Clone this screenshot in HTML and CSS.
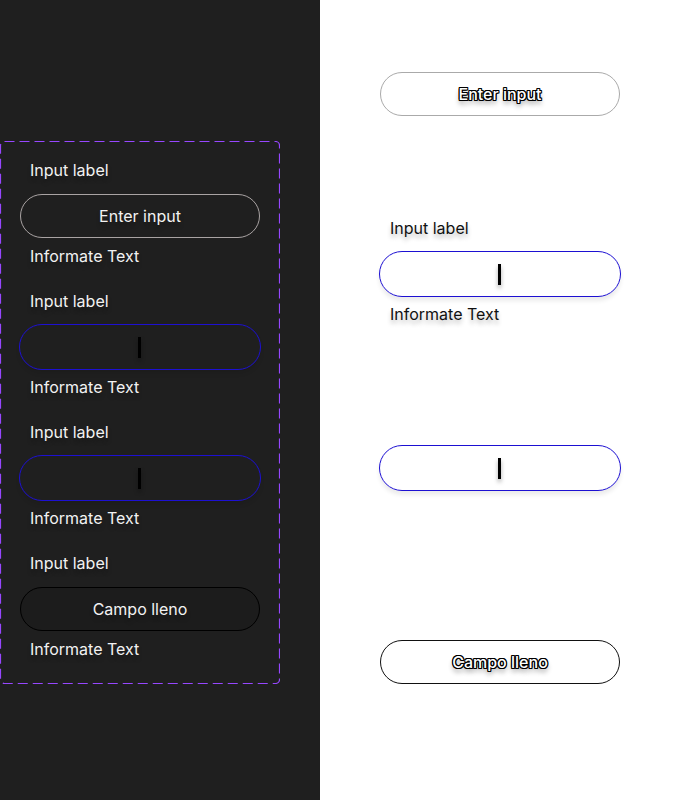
FILE: index.html
```html
<!DOCTYPE html>
<html lang="es">
<head>
<meta charset="utf-8">
<title>Inputs</title>
<link rel="stylesheet" href="styles.css">
</head>
<body>
<div class="page">
  <section class="dark">
    <div class="set">
      <svg class="set-frame" width="280" height="543" viewBox="0 0 280 543" aria-hidden="true">
        <path d="M4.5 0.5 H275.5 A4 4 0 0 1 279.5 4.5 V538.5 A4 4 0 0 1 275.5 542.5 H4.5 A4 4 0 0 1 0.5 538.5 V4.5 A4 4 0 0 1 4.5 0.5 Z" fill="none" stroke="#9747FF" stroke-width="1.2" stroke-dasharray="10 5"/>
      </svg>
      <div class="field">
        <div class="label">Input label</div>
        <div class="input default"><span class="value">Enter input</span></div>
        <div class="info">Informate Text</div>
      </div>
      <div class="field">
        <div class="label">Input label</div>
        <div class="input focus"><span class="caret"></span></div>
        <div class="info">Informate Text</div>
      </div>
      <div class="field">
        <div class="label">Input label</div>
        <div class="input focus"><span class="caret"></span></div>
        <div class="info">Informate Text</div>
      </div>
      <div class="field">
        <div class="label">Input label</div>
        <div class="input filled"><span class="value">Campo lleno</span></div>
        <div class="info">Informate Text</div>
      </div>
    </div>
  </section>
  <section class="light">
    <div class="input default solo-1"><span class="value">Enter input</span></div>
    <div class="field solo-2">
      <div class="label">Input label</div>
      <div class="input focus"><span class="caret"></span></div>
      <div class="info">Informate Text</div>
    </div>
    <div class="input focus solo-3"><span class="caret"></span></div>
    <div class="input filled solo-4"><span class="value">Campo lleno</span></div>
  </section>
</div>
</body>
</html>
```

FILE: styles.css
```css
html, body {
  margin: 0;
  padding: 0;
}
body {
  font-family: Inter, "Noto Sans", sans-serif;
  font-size: 16px;
  background: #ffffff;
}
.page {
  display: grid;
  grid-template-columns: 320px 360px;
  min-height: 800px;
}
.dark {
  background: #1f1f1f;
  padding-top: 141px;
}
.set {
  position: relative;
  box-sizing: border-box;
  width: 280px;
  height: 543px;
  padding: 19px 20px 25px 20px;
  display: flex;
  flex-direction: column;
  gap: 25px;
}
.set-frame {
  position: absolute;
  left: 0;
  top: 0;
  pointer-events: none;
}
.field {
  display: flex;
  flex-direction: column;
}
.label, .info {
  height: 20px;
  line-height: 20px;
  padding-left: 10px;
  text-shadow: 0 4px 4px rgba(0, 0, 0, 0.25);
}
.dark .label, .dark .info {
  color: #f2f2f2;
}
.label {
  margin-bottom: 14px;
}
.info {
  margin-top: 8px;
}
.input {
  box-sizing: border-box;
  width: 240px;
  height: 44px;
  border: 1px solid #a9a3a3;
  border-radius: 22px;
  display: flex;
  align-items: center;
  justify-content: center;
}
.input.focus {
  width: 242px;
  height: 46px;
  margin: -1px -1px;
  border-color: #1d10d2;
  border-radius: 23px;
  box-shadow: 0 4px 4px rgba(0, 0, 0, 0.08);
}
.input.filled {
  border-color: #000000;
}
.dark .input.filled {
  background: #1c1c1c;
}
.value {
  line-height: 20px;
  text-shadow: 0 4px 4px rgba(0, 0, 0, 0.25);
}
.dark .value {
  color: #f2f2f2;
}
.caret {
  display: block;
  width: 3px;
  height: 21px;
  margin-left: -1px;
  background: #000000;
  box-shadow: 0 3px 4px rgba(0, 0, 0, 0.35);
}
.light {
  background: #ffffff;
  padding-top: 72px;
  padding-left: 60px;
  display: flex;
  flex-direction: column;
  align-items: flex-start;
}
.light .input.default {
  border-color: #aaaaaa;
}
.light .input.filled {
  border-color: #111111;
}
.light .value {
  color: #ffffff;
  font-weight: 500;
  text-shadow:
    -1px 0 0 #000, 1px 0 0 #000, 0 -1px 0 #000, 0 1px 0 #000,
    -1px -1px 0 #000, 1px 1px 0 #000, -1px 1px 0 #000, 1px -1px 0 #000,
    0 4px 5px rgba(0, 0, 0, 0.45);
}
.light .label, .light .info {
  color: #111111;
}
.light .solo-2 {
  margin-top: 102px;
}
.light .input.focus.solo-3 {
  margin: 121px 0 0 -1px;
}
.light .solo-4 {
  margin-top: 149px;
}
```
